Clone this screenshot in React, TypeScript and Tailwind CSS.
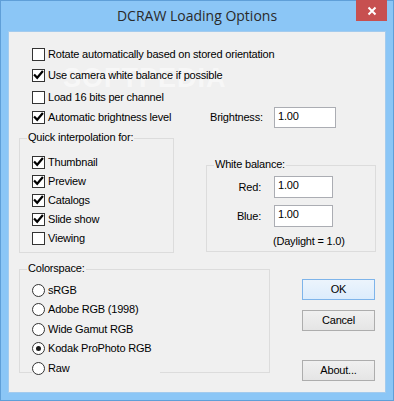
import React from "react";

const font = { fontFamily: '"Liberation Sans", Arial, sans-serif' };

function Check({ checked }: { checked?: boolean }) {
  return (
    <span className="flex h-[13px] w-[13px] shrink-0 items-center justify-center border border-[#333333] bg-white">
      {checked && (
        <svg width="11" height="11" viewBox="0 0 11 11">
          <polyline points="1.8,5.2 4.2,7.8 9.2,1.8" fill="none" stroke="#000" strokeWidth="2.2" strokeLinecap="square" strokeLinejoin="miter" />
        </svg>
      )}
    </span>
  );
}

function CheckRow({ label, checked, className = "" }: { label: string; checked?: boolean; className?: string }) {
  return (
    <div className={"flex h-[13px] items-center gap-[3px] " + className}>
      <Check checked={checked} />
      <span className="leading-[13px]">{label}</span>
    </div>
  );
}

function Radio({ label, checked, className = "" }: { label: string; checked?: boolean; className?: string }) {
  return (
    <div className={"flex h-[13px] items-center gap-[3px] " + className}>
      <span className="flex h-[13px] w-[13px] shrink-0 items-center justify-center rounded-full border border-[#333333] bg-white">
        {checked && <span className="h-[5px] w-[5px] rounded-full bg-[#1a1a1a]" />}
      </span>
      <span className="leading-[13px]">{label}</span>
    </div>
  );
}

function Input({ value, className = "" }: { value: string; className?: string }) {
  return (
    <div className={"flex items-start border border-[#abadb3] bg-white pl-[3px] pt-[2px] leading-[13px] " + className}>
      {value}
    </div>
  );
}

function Group({ legend, className = "", children }: { legend: string; className?: string; children: React.ReactNode }) {
  return (
    <div className={"relative border border-[#dcdcdc] " + className}>
      <span className="absolute left-[7px] top-[-8px] bg-[#f0f0f0] px-[1px] leading-[13px]">{legend}</span>
      {children}
    </div>
  );
}

function Button({ label, primary, className = "" }: { label: string; primary?: boolean; className?: string }) {
  return (
    <div
      className={
        "flex h-[21px] w-[73px] items-center justify-center border leading-[13px] " +
        (primary
          ? "border-[#7eb4ea] bg-gradient-to-b from-[#ecf4fc] to-[#dcecfc] "
          : "border-[#adadad] bg-gradient-to-b from-[#f0f0f0] to-[#e5e5e5] ") +
        className
      }
    >
      {label}
    </div>
  );
}

export default function App() {
  return (
    <div className="h-[401px] w-[394px] border border-[#5f9fd8] bg-[#8bc6f6] px-[7px] pb-[7px]">
      <div className="relative flex h-[30px] items-center justify-center">
        <span
          className="text-[14px] leading-[20px] text-[#2a2a2a]"
          style={{ fontFamily: '"Open Sans", "Noto Sans", sans-serif' }}
        >
          DCRAW Loading Options
        </span>
        <div className="absolute right-[-1px] top-[-1px] flex h-[21px] w-[31px] items-center justify-center bg-[#c75050]">
          <svg width="10" height="10" viewBox="0 0 10 10">
            <path d="M1.5 1.5 L8.5 8.5 M8.5 1.5 L1.5 8.5" stroke="#fff" strokeWidth="2" />
          </svg>
        </div>
      </div>
      <div
        className="relative h-[362px] w-[378px] border border-[#a3cbee] bg-[#f0f0f0] text-[11px] tracking-[-0.2px] text-black"
        style={font}
      >
        <span
          className="pointer-events-none absolute left-[54px] top-[26px] text-[27px] font-bold tracking-[1px] text-white/50"
          style={{ fontFamily: '"Liberation Sans", Arial, sans-serif' }}
        >
          SOFTPEDIA
        </span>
        <div className="relative flex flex-col pl-[23px] pt-[16px]">
          <CheckRow label="Rotate automatically based on stored orientation" />
          <CheckRow label="Use camera white balance if possible" checked className="mt-[8px]" />
          <CheckRow label="Load 16 bits per channel" className="mt-[9px]" />
          <div className="mt-[3px] flex h-[21px] items-center">
            <CheckRow label="Automatic brightness level" checked className="w-[178px]" />
            <span className="w-[64px] leading-[13px]">Brightness:</span>
            <Input value="1.00" className="h-[21px] w-[62px]" />
          </div>
        </div>

        <div className="mt-[10px] flex items-start pl-[10px]">
          <Group legend="Quick interpolation for:" className="h-[115px] w-[155px]">
            <div className="flex flex-col gap-[6px] pl-[12px] pt-[17px]">
              <CheckRow label="Thumbnail" checked />
              <CheckRow label="Preview" checked />
              <CheckRow label="Catalogs" checked />
              <CheckRow label="Slide show" checked />
              <CheckRow label="Viewing" />
            </div>
          </Group>
          <Group legend="White balance:" className="ml-[32px] mt-[27px] h-[87px] w-[170px]">
            <div className="flex flex-col pt-[10px]">
              <div className="flex items-center">
                <span className="w-[54px] text-right leading-[13px]">Red:</span>
                <Input value="1.00" className="ml-[13px] h-[22px] w-[59px]" />
              </div>
              <div className="mt-[7px] flex items-center">
                <span className="w-[54px] text-right leading-[13px]">Blue:</span>
                <Input value="1.00" className="ml-[13px] h-[22px] w-[59px]" />
              </div>
              <span className="ml-[66px] mt-[8px] leading-[13px]">(Daylight = 1.0)</span>
            </div>
          </Group>
        </div>

        <div className="mt-[16px] flex items-start pl-[10px]">
          <Group legend="Colorspace:" className="h-[104px] w-[251px]">
            <div className="flex flex-col pl-[12px] pt-[14px]">
              <Radio label="sRGB" />
              <Radio label="Adobe RGB (1998)" className="mt-[6px]" />
              <Radio label="Wide Gamut RGB" className="mt-[7px]" />
              <Radio label="Kodak ProPhoto RGB" checked className="mt-[6px]" />
              <Radio label="Raw" className="mt-[7px] w-[128px] bg-[#f0f0f0]" />
            </div>
          </Group>
          <div className="ml-[32px] mt-[10px] flex flex-col">
            <Button label="OK" primary />
            <Button label="Cancel" className="mt-[10px]" />
            <Button label="About..." className="mt-[29px]" />
          </div>
        </div>
      </div>
    </div>
  );
}
